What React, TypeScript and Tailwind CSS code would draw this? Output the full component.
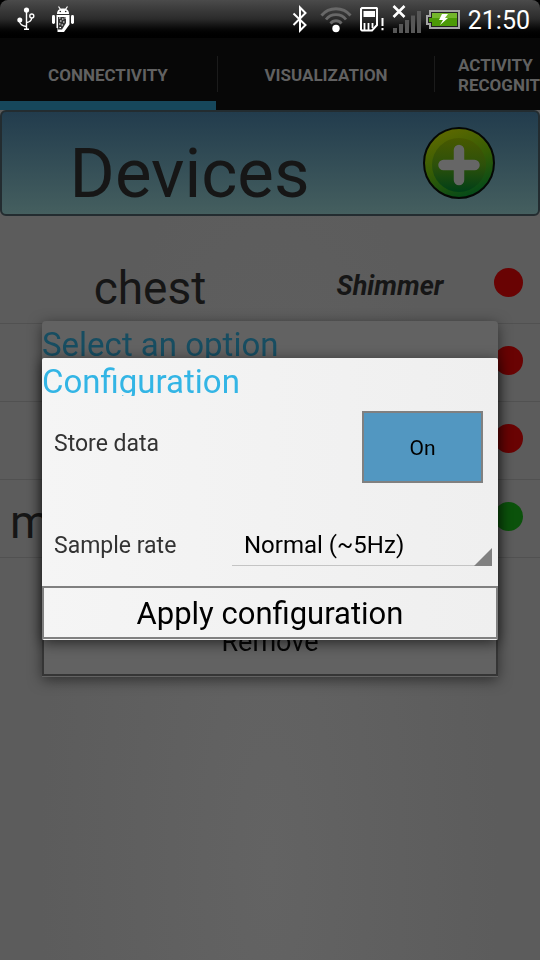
import React from "react";

type Device = { name: string; kind: string; online: boolean };

const devices: Device[] = [
  { name: "chest", kind: "Shimmer", online: false },
  { name: "", kind: "", online: false },
  { name: "", kind: "", online: false },
  { name: "m", kind: "", online: true },
];

function UsbIcon() {
  return (
    <svg width="18" height="24" viewBox="0 0 18 24" fill="none" stroke="#fff" strokeWidth="1.4" aria-hidden="true">
      <path d="M9.500 3V22M7 22.300h5" />
      <path d="M9.500 19.500C4.500 19 2.800 17 2.500 14M9.500 15.500c3.500-.5 5-2 5.200-4.500" />
      <circle cx="9.500" cy="3" r="2.600" fill="#fff" stroke="none" />
      <circle cx="2.800" cy="13" r="2.500" fill="#fff" stroke="none" />
      <circle cx="14.800" cy="9" r="2" />
    </svg>
  );
}

function DebugIcon() {
  return (
    <svg width="22" height="27" viewBox="0 0 22 27" fill="#fff" aria-hidden="true">
      <path d="M6.500 .5l2 2.800M15.500 .5l-2 2.800" stroke="#fff" strokeWidth="1.200" />
      <path d="M5 8c0-4 2.500-5.500 6-5.500S17 4 17 8z" />
      <circle cx="8.300" cy="5.500" r=".8" fill="#222" />
      <circle cx="13.700" cy="5.500" r=".8" fill="#222" />
      <rect x="0" y="9" width="3" height="9" rx="1.400" />
      <rect x="19" y="9" width="3" height="9" rx="1.400" />
      <path d="M4.500 9h13v9.500L12 26H5.500v-4h-1z" />
      <path d="M6 11h8v6l-4 6.500H6z" fill="#333" />
      <path d="M7 12h1.500M10 13h1.500M12.500 12H14M8 15h1.500M11 16h1.500M7 18h1.500M9.500 19H11M7.500 21.500H9" stroke="#fff" strokeWidth="1.200" />
    </svg>
  );
}

function BluetoothIcon() {
  return (
    <svg width="16" height="28" viewBox="0 0 16 28" fill="none" stroke="#fff" strokeWidth="2" aria-hidden="true">
      <path d="M1.500 8.500L13.500 20L8 25.500V2.500L13.500 8L1.500 20" />
    </svg>
  );
}

function WifiIcon() {
  return (
    <svg width="32" height="27" viewBox="0 0 32 27" fill="none" stroke="#686868" strokeWidth="2.800" aria-hidden="true">
      <path d="M1.500 9.500C9 .5 23 .5 30.500 9.500" />
      <path d="M6 13.500c5-6.500 15-6.500 20 0" />
      <path d="M10.500 17.500c3-3.700 8-3.700 11 0" />
      <circle cx="16" cy="22.500" r="3.700" fill="#fff" stroke="none" />
    </svg>
  );
}

function SimIcon() {
  return (
    <svg width="24" height="26" viewBox="0 0 24 26" fill="none" aria-hidden="true">
      <path d="M2 2h14.500L17 2.500V19l-5 5.500H2L1 23.500V3z" stroke="#fff" strokeWidth="2" />
      <path d="M3.500 5H15v6H3.500z" fill="#fff" />
      <path d="M4.500 17v7M8.500 17v7M12.500 17v5" stroke="#fff" strokeWidth="1.800" />
      <path d="M22.500 12v8M22.500 22v2.200" stroke="#fff" strokeWidth="2" />
    </svg>
  );
}

function SignalIcon() {
  return (
    <svg width="30" height="30" viewBox="0 0 30 30" aria-hidden="true">
      <path d="M1 24h4v5H1zM7 20h4v9H7zM13 16h4v13h-4zM19 11.500h4V29h-4zM25 7h4v22h-4z" fill="#575757" />
      <path d="M1.500 2l11 11M12.500 2l-11 11" stroke="#fff" strokeWidth="2.600" />
    </svg>
  );
}

function BatteryIcon() {
  return (
    <svg width="34" height="19" viewBox="0 0 34 19" aria-hidden="true">
      <path d="M4 1h29v17H4v-4H1V6h3z" fill="#222" stroke="#a5a5a5" strokeWidth="2" />
      <path d="M6 3h25v13H6v-4H3V8h3z" fill="#4c9a06" />
      <path d="M6 3h25v5H6z" fill="#74b62c" />
      <path d="M16 4h6l-3 4h3l-8 7 3-5h-4z" fill="#fff" />
    </svg>
  );
}

function AddIcon() {
  return (
    <svg width="72" height="72" viewBox="0 0 72 72" aria-hidden="true">
      <defs>
        <linearGradient id="rim" x1="0.300" y1="0" x2="0.700" y2="1">
          <stop offset="0" stopColor="#5f6900" />
          <stop offset="0.500" stopColor="#355c05" />
          <stop offset="1" stopColor="#00481a" />
        </linearGradient>
        <linearGradient id="face" x1="0" y1="0" x2="0" y2="1">
          <stop offset="0" stopColor="#485900" />
          <stop offset="0.500" stopColor="#2d510a" />
          <stop offset="1" stopColor="#003f17" />
        </linearGradient>
      </defs>
      <circle cx="36" cy="36" r="35" fill="url(#rim)" stroke="#050805" strokeWidth="2" />
      <circle cx="36" cy="38" r="27" fill="url(#face)" />
      <path d="M36 23v30M20.500 38h31" stroke="#666" strokeWidth="10.500" strokeLinecap="round" />
    </svg>
  );
}

function StatusBar() {
  return (
    <div className="bg-black">
      <div className="flex h-[38px] items-center rounded-t-lg bg-linear-to-b from-[#4b4b4b] via-[#2b2b2b] to-black pr-[10px] pl-[17px] text-white">
        <UsbIcon />
        <span className="ml-[17px]">
          <DebugIcon />
        </span>
        <div className="ml-auto flex items-center">
          <BluetoothIcon />
          <span className="ml-3"><WifiIcon /></span>
          <span className="ml-2"><SimIcon /></span>
          <span className="ml-2"><SignalIcon /></span>
          <span className="ml-1"><BatteryIcon /></span>
          <time className="ml-2 pt-1 text-[25px] leading-8">21:50</time>
        </div>
      </div>
    </div>
  );
}

function Tabs() {
  return (
    <nav className="flex h-[72px] items-center overflow-hidden bg-[#070707] text-[17px] leading-5 font-bold text-[#616161]">
      <button className="h-full w-2/5 shrink-0 border-b-9 border-[#16475b] pt-[11px] text-center uppercase">
        Connectivity
      </button>
      <span className="ml-px h-9 w-px shrink-0 bg-[#1b1b1b]" />
      <button className="h-full w-2/5 shrink-0 pt-0.5 text-center uppercase">Visualization</button>
      <span className="h-9 w-px shrink-0 bg-[#1b1b1b]" />
      <button className="h-full w-2/5 shrink-0 pt-0.5 pl-[23px] text-left uppercase">
        Activity
        <br />
        Recognition
      </button>
    </nav>
  );
}

function DeviceRow({ device }: { device: Device }) {
  return (
    <li className="grid h-[78px] grid-cols-[5fr_3fr_1fr] items-center border-b border-[#515151] text-[#161616]">
      <span className={device.name === "m" ? "pt-[6px] pl-[10px] text-[46px] leading-none" : "pt-[6px] text-center text-[46px] leading-none"}>
        {device.name}
      </span>
      <span className="pt-1 text-center text-[27px] font-bold italic">{device.kind}</span>
      <span
        className={
          device.online
            ? "mb-1 ml-[14px] size-[29px] rounded-full bg-[#0b520b]"
            : "mb-1 ml-[14px] size-[29px] rounded-full bg-[#690303]"
        }
      />
    </li>
  );
}

function OptionsDialog() {
  return (
    <div className="fixed inset-x-0 top-[38px] bottom-0 flex items-center justify-center px-[42px]">
      <section className="flex h-[356px] w-full flex-col justify-between rounded-t-sm bg-[#626262] shadow-[0_3px_14px_rgba(0,0,0,0.5)]">
        <h2 className="h-[38px] overflow-hidden text-[33px] leading-12 text-[#174d61]">Select an option</h2>
        <button className="mb-px h-[74px] border-2 border-[#353535] pt-[6px] text-[27px] text-[#060606]">Remove</button>
      </section>
    </div>
  );
}

function ConfigurationDialog() {
  return (
    <div className="fixed inset-x-0 top-[38px] bottom-0 flex items-center justify-center px-[42px]">
      <section
        role="dialog"
        aria-labelledby="config-title"
        className="w-full rounded-xs bg-linear-to-r from-[#f5f5f5] to-[#efefef] text-[#333] shadow-[0_3px_14px_rgba(0,0,0,0.6)]"
      >
        <h2 id="config-title" className="h-[38px] overflow-hidden text-[33px] leading-12 text-[#33b5e5]">
          Configuration
        </h2>
        <div className="flex items-start justify-between pt-[15px] pr-[15px] pl-3">
          <label htmlFor="store" className="text-[23px] leading-[66px]">Store data</label>
          <button id="store" className="h-[72px] w-[121px] border-2 border-[#808080] bg-[#5297c1] pt-[3px] text-[21px] text-black">
            On
          </button>
        </div>
        <div className="flex items-start justify-between pt-[39px] pr-[6px] pb-4 pl-3">
          <label htmlFor="rate" className="text-[23px] leading-[48px]">Sample rate</label>
          <div className="relative w-[260px]">
            <select
              id="rate"
              className="block h-11 w-full appearance-none border-b border-[#c4c4c4] bg-transparent pt-[3px] pl-3 text-2xl text-black"
            >
              <option>Normal (~5Hz)</option>
            </select>
            <svg className="pointer-events-none absolute right-0 bottom-0" width="18" height="18" viewBox="0 0 18 18" aria-hidden="true">
              <path d="M18 0v18H0z" fill="#808080" />
            </svg>
          </div>
        </div>
        <button className="mb-px block h-[53px] w-full border-2 border-[#808080] pt-0.5 text-[31px] leading-none text-black">
          Apply configuration
        </button>
      </section>
    </div>
  );
}

export default function App() {
  return (
    <main className="min-h-screen bg-[#5e5e5e] bg-radial-[at_50%_90%] from-[#636363] to-[#5c5c5c] to-60% font-[Roboto,sans-serif]">
      <StatusBar />
      <Tabs />
      <header className="grid h-[106px] grid-cols-[7fr_3fr] items-center rounded-md border-2 border-[#232c30] bg-linear-to-b from-[#223c4d] to-[#455f5f]">
        <h1 className="pt-[22px] text-center text-[69px] leading-[80px] text-[#161616]">Devices</h1>
        <button aria-label="Add device" className="justify-self-center pl-0.5">
          <AddIcon />
        </button>
      </header>
      <ul className="pt-[30px]">
        {devices.map((device, i) => (
          <DeviceRow key={i} device={device} />
        ))}
      </ul>
      <OptionsDialog />
      <ConfigurationDialog />
    </main>
  );
}
